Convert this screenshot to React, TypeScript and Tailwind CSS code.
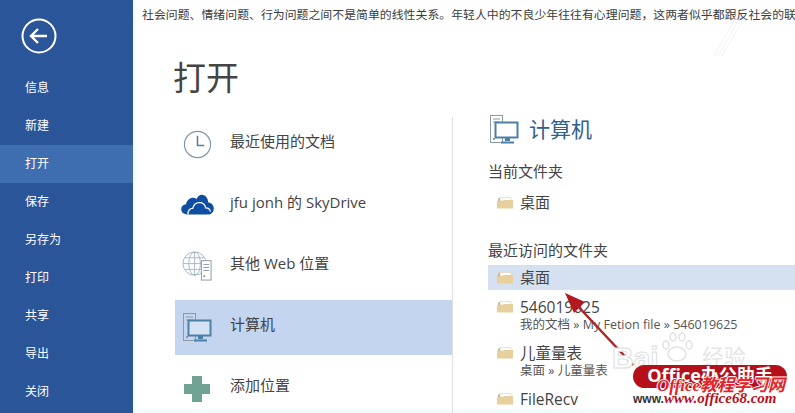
import React from 'react';

const FONT = "font-['Open_Sans','Noto_Sans_CJK_SC',sans-serif]";

const navItems = ['信息', '新建', '打开', '保存', '另存为', '打印', '共享', '导出', '关闭'];

const BackIcon = () => (
  <svg width="36" height="36" viewBox="0 0 36 36" fill="none" stroke="#fff">
    <circle cx="18" cy="18" r="16.5" strokeWidth="2" />
    <path d="M10 18h16M17 11l-7 7 7 7" strokeWidth="2.4" />
  </svg>
);

const ClockIcon = () => (
  <svg width="29" height="29" viewBox="0 0 30 30" fill="none" stroke="#7d98ae">
    <circle cx="15" cy="15" r="13.5" strokeWidth="1.2" />
    <path d="M15 6v10h7" strokeWidth="1.6" stroke="#5a7f9c" />
  </svg>
);

const CloudIcon = () => (
  <svg width="35" height="23" viewBox="0 0 34 24">
    <path fill="#0f4ea3" d="M7 21.5C2.5 21.5 0 19 0 16c0-3 2.2-5 5-5.2C6 6.5 9 4 12 4c1.500 0 3 .5 4 1.300C17.500 2 20 0.500 22.500 1c3.500.7 5.500 3.500 5.500 7.500 3.500.5 6 3.200 6 6.500 0 3.500-2.500 6.500-6.500 6.500z" />
    <path fill="none" stroke="#fff" strokeWidth="1.300" d="M7 21.500c0-4 2-6.500 5-6.500 1-4 4-6 7-6 3.500 0 6 2.500 6.500 5.500 2.500 0 4.500 1.500 5 4" />
  </svg>
);

const GlobeIcon = () => (
  <svg width="31" height="31" viewBox="0 0 32 32" fill="none">
    <g stroke="#9db3c2" strokeWidth="0.9">
      <circle cx="13" cy="13" r="12" />
      <ellipse cx="13" cy="13" rx="6" ry="12" />
      <path d="M13 1v24M1 13h24M3 7h20M3 19h20" />
    </g>
    <rect x="20" y="10" width="10" height="20" fill="#fff" stroke="#8b989f" />
    <path d="M22 14h6M22 17h6M22 20h6" stroke="#8b989f" />
    <rect x="22" y="25" width="2" height="2" fill="#8b989f" />
  </svg>
);

const ComputerIcon = ({ fill }: { fill: string }) => (
  <svg width="29" height="30" viewBox="0 0 29 30" fill="none">
    <rect x="0.500" y="0.500" width="12" height="27" fill={fill} stroke="#8b9aa6" />
    <path d="M3 4h7M3 7h7" stroke="#8b9aa6" />
    <rect x="3" y="23" width="2" height="2" fill="#8b9aa6" />
    <rect x="5.500" y="7.500" width="22" height="15" fill={fill === 'none' ? '#fff' : '#d4e3f3'} stroke="#4f7ea6" strokeWidth="2" />
    <path d="M15 23h5v3h-5zM11 26.500h13v2H11z" fill="#4f7ea6" />
  </svg>
);

const PlusIcon = () => (
  <div className="relative h-[26px] w-[26px]">
    <div className="absolute inset-x-[8px] inset-y-0 bg-[#70a394]" />
    <div className="absolute inset-x-0 inset-y-[8px] bg-[#70a394]" />
  </div>
);

const FolderIcon = () => (
  <svg width="16" height="13" viewBox="0 0 16 13" className="shrink-0">
    <path d="M1 3l1-1h3l1 1h8v3H1z" fill="#c9b486" />
    <path d="M3 1.500h11V5H3z" fill="#fff" stroke="#d9cdb0" strokeWidth="0.600" />
    <path d="M0 12.500V5h6l1-1h9v8.500z" fill="#e8cf9e" />
  </svg>
);

const places = [
  { label: '最近使用的文档', icon: <ClockIcon /> },
  { label: 'jfu jonh 的 SkyDrive', icon: <CloudIcon /> },
  { label: '其他 Web 位置', icon: <GlobeIcon /> },
  { label: '计算机', icon: <ComputerIcon fill="#c3d5ef" />, active: true },
  { label: '添加位置', icon: <PlusIcon /> },
];

const recent = [
  { name: '546019625', path: '我的文档 » My Fetion file » 546019625' },
  { name: '儿童量表', path: '桌面 » 儿童量表' },
  { name: 'FileRecv', path: '' },
];

const Watermark = () => (
  <>
    {/* 右上角淡色斜线 */}
    <svg className="absolute left-[700px] top-[18px]" width="60" height="40" viewBox="0 0 60 40" fill="none" stroke="#f2f2f2">
      <path d="M14 38L36 0M18 38L40 0M22 38L44 0" />
    </svg>
    {/* 红色箭头 */}
    <svg className="absolute left-[555px] top-[285px]" width="90" height="90" viewBox="0 0 90 90" fill="none">
      <path d="M78 80L18 16" stroke="#a9272b" strokeWidth="2.500" />
      <path d="M10 8l20 9-11 11z" fill="#b3191f" />
    </svg>
    {/* 百度水印 */}
    <div className="absolute left-[612px] top-[343px] font-['Liberation_Sans',sans-serif] text-[30px] font-bold leading-none text-white [-webkit-text-stroke:1px_#dedede]">
      Bai
    </div>
    <svg className="absolute left-[660px] top-[330px]" width="34" height="34" viewBox="0 0 34 34" fill="none" stroke="#e2e2e2" strokeWidth="1.500">
      <ellipse cx="17" cy="24" rx="9" ry="7" />
      <ellipse cx="6" cy="15" rx="3" ry="4" />
      <ellipse cx="13" cy="7" rx="3" ry="4" />
      <ellipse cx="22" cy="7" rx="3" ry="4" />
      <ellipse cx="29" cy="15" rx="3" ry="4" />
    </svg>
    <div className={`absolute left-[702px] top-[345px] text-[22px] leading-none text-[#e6e6e6] ${FONT}`}>经验</div>
    {/* 红色标签 */}
    <div className={`absolute left-[633px] top-[365px] flex h-[23px] w-[154px] items-start justify-center rounded-[12px] bg-[#b5101a] pt-[1px] text-[18px] font-bold leading-none text-white ${FONT}`}>
      Office办公助手
    </div>
    <div className="absolute left-[657px] top-[377px] whitespace-nowrap font-['Liberation_Serif','Noto_Sans_CJK_SC',serif] text-[17px] font-bold italic leading-none text-[#e3222a] [text-shadow:1px_0_0_#fff,-1px_0_0_#fff,0_1px_0_#fff,0_-1px_0_#fff]">
      Office教程学习网
    </div>
    <div className="absolute left-[633px] top-[393px] font-['Liberation_Sans',sans-serif] text-[12px] font-bold leading-none text-[#333]">
      www.
    </div>
    <div className="absolute left-[664px] top-[391px] font-['Liberation_Serif',serif] text-[15px] font-bold italic leading-none text-[#b5101a] [text-shadow:0_0_2px_#fff]">
      www.office68.com
    </div>
  </>
);

export default function App() {
  return (
    <div className={`relative flex h-[413px] w-[795px] overflow-hidden bg-white ${FONT}`}>
      {/* 左侧导航 */}
      <aside className="flex w-[133px] shrink-0 flex-col bg-[#2a5699] text-white">
        <div className="h-[69px] shrink-0 pl-[21px] pt-[18px]">
          <BackIcon />
        </div>
        {navItems.map((item) => (
          <div
            key={item}
            className={`flex h-[38px] shrink-0 items-center pl-[25px] text-[12px] ${item === '打开' ? 'bg-[#3e6db0]' : ''}`}
          >
            {item}
          </div>
        ))}
      </aside>

      <main className="flex min-w-0 flex-1 flex-col shadow-[inset_2px_-3px_0_#f0fbff]">
        <p className="h-[29px] shrink-0 whitespace-nowrap pl-[9px] pt-[6px] text-[11.900px] leading-[16px] text-[#3c3c3c]">
          社会问题、情绪问题、行为问题之间不是简单的线性关系。年轻人中的不良少年往往有心理问题，这两者似乎都跟反社会的联
        </p>
        <h1 className="h-[88px] shrink-0 pl-[40px] pt-[25px] text-[33px] font-normal leading-[48px] text-[#444]">打开</h1>

        <div className="flex min-h-0 flex-1">
          {/* 位置列表 */}
          <div className="flex w-[320px] shrink-0 flex-col gap-[6px] border-r border-[#e1e1e1] pl-[42px]">
            {places.map((place) => (
              <div
                key={place.label}
                className={`flex h-[55px] shrink-0 items-center text-[15px] text-[#444] ${place.active ? 'bg-[#c3d5ef]' : ''}`}
              >
                <div className="flex w-[55px] shrink-0 items-center justify-center pr-[11px]">{place.icon}</div>
                <span className="whitespace-nowrap pb-[6px]">{place.label}</span>
              </div>
            ))}
          </div>

          {/* 文件夹列表 */}
          <div className="flex min-w-0 flex-1 flex-col pl-[35px]">
            <div className="flex h-[26px] shrink-0 items-center gap-[10px] pl-[2px] text-[21px] text-[#31608a]">
              <ComputerIcon fill="none" />
              <span>计算机</span>
            </div>
            <div className="mt-[18px] flex h-[20px] shrink-0 items-center text-[15px] text-[#444]">当前文件夹</div>
            <div className="mt-[8px] flex h-[26px] shrink-0 items-center gap-[7px] pl-[9px] text-[15px] text-[#444]">
              <FolderIcon />
              桌面
            </div>
            <div className="mt-[25px] flex h-[20px] shrink-0 items-center text-[15px] text-[#444]">最近访问的文件夹</div>
            <div className="mt-[5px] flex h-[25px] shrink-0 items-center gap-[7px] bg-[#d5e1f1] pl-[9px] text-[15px] text-[#444]">
              <FolderIcon />
              桌面
            </div>
            <div className="mt-[7px] flex shrink-0 flex-col gap-[10px]">
              {recent.map((folder) => (
                <div key={folder.name} className="flex gap-[7px] pl-[9px]">
                  <div className="pt-[3px]">
                    <FolderIcon />
                  </div>
                  <div className="flex flex-col text-[#444]">
                    <span className="text-[15.500px] leading-[20px]">{folder.name}</span>
                    {folder.path && <span className="whitespace-nowrap text-[12.500px] leading-[16px] text-[#555]">{folder.path}</span>}
                  </div>
                </div>
              ))}
            </div>
          </div>
        </div>
      </main>
      <Watermark />
    </div>
  );
}
